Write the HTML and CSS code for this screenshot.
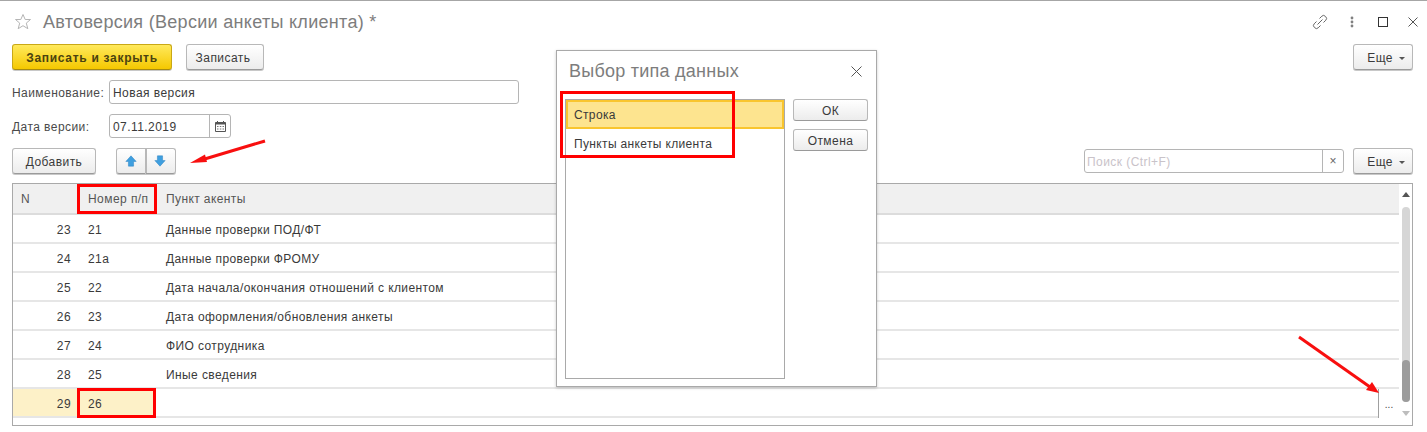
FILE: index.html
```html
<!DOCTYPE html>
<html lang="ru">
<head>
<meta charset="utf-8">
<title>Автоверсия</title>
<link rel="stylesheet" href="styles.css">
</head>
<body>
<main class="window">
  <header class="titlebar">
    <svg class="star" width="18" height="18" viewBox="0 0 18 18"><path d="M9 1.500l2.200 5h5.300l-4.200 3.600 1.500 5.600L9 12.700l-4.800 3 1.500-5.600L1.500 6.500h5.300z" fill="none" stroke="#b5b5b5" stroke-width="1"/></svg>
    <h1 class="title">Автоверсия (Версии анкеты клиента) *</h1>
    <div class="win-tools">
      <svg width="16" height="16" viewBox="0 0 16 16" class="tool-link"><path d="M5.500 10.500l5-5M7.500 4.500l2.300-2.300a2.400 2.400 0 0 1 3.400 0l0.600 0.600a2.400 2.400 0 0 1 0 3.400l-2.300 2.300M8.500 11.500l-2.300 2.300a2.400 2.400 0 0 1-3.400 0l-0.600-0.600a2.400 2.400 0 0 1 0-3.400l2.300-2.300" fill="none" stroke="#666" stroke-width="1"/></svg>
      <svg width="4" height="12" viewBox="0 0 4 12" class="tool-dots"><circle cx="2" cy="2" r="1.400" fill="#808080"/><circle cx="2" cy="6" r="1.400" fill="#808080"/><circle cx="2" cy="10" r="1.400" fill="#808080"/></svg>
      <span class="tool-max"></span>
      <svg width="10" height="10" viewBox="0 0 10 10" class="tool-close"><path d="M0.500 0.500l9 9M9.500 0.500l-9 9" stroke="#555" stroke-width="1"/></svg>
    </div>
  </header>

  <div class="row row-actions">
    <button class="btn btn-primary">Записать и закрыть</button>
    <button class="btn btn-save">Записать</button>
    <button class="btn btn-more">Еще <i class="caret"></i></button>
  </div>

  <div class="row field-row">
    <label class="label">Наименование:</label>
    <div class="input input-name">Новая версия</div>
  </div>
  <div class="row field-row">
    <label class="label">Дата версии:</label>
    <div class="input input-date">
      <span class="date-value">07.11.2019</span>
      <span class="date-btn">
        <svg width="11" height="11" viewBox="0 0 11 11"><path d="M0.500 1.500h10v9h-10z" fill="none" stroke="#555"/><path d="M0.500 1.500h10v2h-10z" fill="#555"/><path d="M2.500 0v2M8.500 0v2" stroke="#555"/><path d="M2 5.500h1.500M4.800 5.500h1.500M7.500 5.500h1.500M2 8h1.500M4.800 8h1.500M7.500 8h1.500" stroke="#777"/></svg>
      </span>
    </div>
  </div>

  <div class="row row-tools">
    <button class="btn btn-add">Добавить</button>
    <div class="btn-group">
      <button class="btn-icon">
        <svg width="12" height="12" viewBox="0 0 13 14"><path d="M6.500 1L12.500 7.500H9.500V13H3.500V7.500H0.500z" fill="#3f9fdf" stroke="#2f86c4" stroke-width="0.600"/></svg>
      </button>
      <button class="btn-icon btn-icon-down">
        <svg width="12" height="12" viewBox="0 0 13 14"><path d="M6.500 13L12.500 6.500H9.500V1H3.500V6.500H0.500z" fill="#3f9fdf" stroke="#2f86c4" stroke-width="0.600"/></svg>
      </button>
    </div>
    <div class="search">
      <span class="search-text">Поиск (Ctrl+F)</span>
      <span class="search-clear">×</span>
    </div>
    <button class="btn btn-more">Еще <i class="caret"></i></button>
  </div>

  <section class="table">
    <div class="table-main">
      <div class="t-row t-head">
        <span class="c-n head-n">N</span>
        <span class="c-num">Номер п/п</span>
        <span class="c-name">Пункт акенты</span>
      </div>
      <div class="t-row"><span class="c-n">23</span><span class="c-num">21</span><span class="c-name">Данные проверки ПОД/ФТ</span></div>
      <div class="t-row"><span class="c-n">24</span><span class="c-num">21а</span><span class="c-name">Данные проверки ФРОМУ</span></div>
      <div class="t-row"><span class="c-n">25</span><span class="c-num">22</span><span class="c-name">Дата начала/окончания отношений с клиентом</span></div>
      <div class="t-row"><span class="c-n">26</span><span class="c-num">23</span><span class="c-name">Дата оформления/обновления анкеты</span></div>
      <div class="t-row"><span class="c-n">27</span><span class="c-num">24</span><span class="c-name">ФИО сотрудника</span></div>
      <div class="t-row"><span class="c-n">28</span><span class="c-num">25</span><span class="c-name">Иные сведения</span></div>
      <div class="t-row t-current">
        <span class="c-n">29</span><span class="c-num">26</span><span class="c-name"></span>
        <span class="c-pick">...</span>
      </div>
    </div>
    <div class="scrollbar">
      <i class="sb-up"></i>
      <div class="sb-track"><div class="sb-thumb"></div></div>
      <i class="sb-down"></i>
    </div>
  </section>
</main>

<aside class="dialog">
  <div class="dlg-head">
    <h2 class="dlg-title">Выбор типа данных</h2>
    <svg width="11" height="11" viewBox="0 0 11 11"><path d="M0.500 0.500l10 10M10.500 0.500l-10 10" stroke="#555" stroke-width="1"/></svg>
  </div>
  <div class="dlg-body">
    <div class="list">
      <div class="list-item list-selected">Строка</div>
      <div class="list-item">Пункты анкеты клиента</div>
    </div>
    <div class="dlg-buttons">
      <button class="btn btn-dlg">ОК</button>
      <button class="btn btn-dlg">Отмена</button>
    </div>
  </div>
</aside>

<div class="mark mark-head"></div>
<div class="mark mark-cell"></div>
<div class="mark mark-list"></div>
<svg class="arrows" width="1427" height="432" viewBox="0 0 1427 432">
  <path d="M265 141L203 159.500" stroke="#f80f0f" stroke-width="3" fill="none"/>
  <path d="M190 163L205 154.500L207 162z" fill="#f80f0f"/>
  <path d="M1299 337L1370 387" stroke="#f80f0f" stroke-width="3" fill="none"/>
  <path d="M1379 393L1366 390L1372 382z" fill="#f80f0f"/>
</svg>
</body>
</html>
```
FILE: styles.css
```css
* { box-sizing: border-box; }
html, body { margin: 0; padding: 0; }
body {
  width: 1427px;
  height: 432px;
  overflow: hidden;
  background: #fff;
  color: #3a3a3a;
  font: 12px/16px "Liberation Sans", Arial, sans-serif;
  letter-spacing: .44px;
  border-top: 1px solid #a6a6a6;
}
.window { padding: 0 14px 0 12px; }
.titlebar {
  height: 43px;
  display: flex;
  align-items: center;
  padding-bottom: 2px;
}
.star { margin: 0 11px 0 2px; }
.title {
  margin: 0;
  font-size: 18px;
  font-weight: 400;
  line-height: 24px;
  letter-spacing: .3px;
  color: #7d7d7d;
}
.win-tools {
  margin-left: auto;
  display: flex;
  align-items: center;
}
.tool-link { margin-right: 22px; }
.tool-dots { margin-right: 24px; }
.tool-max {
  width: 10px;
  height: 10px;
  border: 1px solid #333;
  margin-right: 20px;
}
.tool-close { margin-right: -5px; }

.row { display: flex; align-items: center; }
.row-actions { height: 26px; margin-bottom: 10px; }
.field-row { height: 24px; margin-bottom: 10px; }
.row-tools { height: 26px; margin-bottom: 9px; }

.btn, .btn-icon {
  font: inherit;
  letter-spacing: inherit;
  color: #3a3a3a;
  height: 26px;
  padding: 1px 0 0;
  border: 1px solid #b8b8b8;
  border-bottom-color: #9a9a9a;
  border-radius: 3px;
  background: linear-gradient(#fff, #ececec);
  box-shadow: 0 1px 0 #c8c8c8;
}
.btn-primary {
  width: 160px;
  font-weight: 700;
  letter-spacing: .7px;
  color: #4a4210;
  background: linear-gradient(#ffe95c, #f5c800);
  border-color: #c9a816;
  border-bottom-color: #a78b10;
}
.btn-save { width: 78px; margin-left: 14px; padding-right: 4px; }
.btn-more { width: 60px; margin-left: auto; flex: none; padding-left: 6px; }
.caret {
  display: inline-block;
  width: 0;
  height: 0;
  margin-left: 2px;
  vertical-align: 2px;
  border: 3px solid transparent;
  border-top-color: #555;
  border-bottom-width: 0;
}
.label { width: 97px; color: #4a4a4a; padding-top: 1px; }
.input {
  height: 24px;
  padding-top: 1px;
  border: 1px solid #b5b5b5;
  border-radius: 3px;
  background: #fff;
  display: flex;
  align-items: center;
}
.input-name { width: 410px; padding-left: 3px; }
.input-date { width: 122px; padding-top: 0; }
.date-value { flex: 1; padding-left: 3px; padding-top: 1px; }
.date-btn {
  width: 21px;
  height: 100%;
  border-left: 1px solid #b5b5b5;
  display: flex;
  align-items: center;
  justify-content: center;
}

.btn-add { width: 84px; }
.btn-group { display: flex; margin-left: 20px; }
.btn-icon {
  width: 30px;
  display: flex;
  align-items: center;
  justify-content: center;
  padding: 0;
  border-radius: 3px 0 0 3px;
}
.btn-icon + .btn-icon { border-left: 0; border-radius: 0 3px 3px 0; box-shadow: 0 1px 0 #c8c8c8, inset 1px 0 0 #b8b8b8; }
.btn-icon-down { padding-right: 2px; }
.search {
  margin-left: auto;
  width: 260px;
  height: 24px;
  border: 1px solid #b5b5b5;
  border-radius: 3px;
  display: flex;
  align-items: center;
}
.search-text { flex: 1; padding: 1px 0 0 2px; color: #c9c3c9; }
.search-clear {
  width: 21px;
  height: 100%;
  border-left: 1px solid #b5b5b5;
  text-align: center;
  line-height: 22px;
  letter-spacing: 0;
  color: #666;
}
.row-tools .btn-more { margin-left: 9px; }

.table {
  height: 243px;
  width: 1401px;
  border: 1px solid #a9a9a9;
  display: flex;
}
.table-main { width: 1386px; flex: none; }
.t-row {
  position: relative;
  height: 29px;
  display: grid;
  grid-template-columns: 64px 80px 1fr;
  align-items: center;
  border-bottom: 2px solid #e6e6e6;
}
.t-row > span { line-height: 31px; height: 27px; }
.t-row.t-head > span { line-height: 29px; }
.t-head {
  height: 31px;
  background: #f0f0f0;
  color: #555;
  border-bottom-color: #dcdcdc;
}
.c-n { text-align: right; padding-right: 6px; }
.head-n { text-align: left; padding-left: 8px; }
.c-num { padding-left: 11px; }
.c-name { padding-left: 9px; letter-spacing: .4px; }
.t-current { background: linear-gradient(to right, #fdf1c8 142px, #fff 142px); }
.t-row > .c-pick {
  position: absolute;
  right: 0;
  top: 0;
  bottom: -2px;
  height: auto;
  width: 21px;
  border-left: 1px solid #a0a0a0;
  background: #fff;
  text-align: center;
  letter-spacing: 0;
  color: #444;
  font-size: 10px;
}
.scrollbar {
  flex: 1;
  padding: 0 3px 0 3px;
  display: flex;
  flex-direction: column;
  align-items: center;
}
.sb-up, .sb-down {
  width: 0;
  height: 0;
  border: 4px solid transparent;
  flex: none;
}
.sb-up { border-bottom: 5px solid #555; border-top-width: 0; margin: 8px 0 10px; }
.sb-down { border-top: 5px solid #bdbdbd; border-bottom-width: 0; margin-top: 9px; }
.sb-track {
  width: 8px;
  height: 195px;
  flex: none;
  background: #d6d6d6;
  border-radius: 4px;
  display: flex;
  align-items: flex-end;
}
.sb-thumb {
  width: 100%;
  height: 42px;
  background: #9c9c9c;
  border-radius: 4px;
}

.dialog {
  position: absolute;
  left: 556px;
  top: 50px;
  width: 321px;
  height: 337px;
  background: #fff;
  border: 1px solid #a9a9a9;
  box-shadow: 0 1px 3px rgba(0,0,0,.2);
  padding: 0 8px;
}
.dlg-head {
  height: 48px;
  display: flex;
  align-items: center;
  justify-content: space-between;
  padding: 0 6px 8px 4px;
}
.dlg-title {
  margin: 0;
  font-size: 18px;
  font-weight: 400;
  letter-spacing: .25px;
  color: #7d7d7d;
}
.dlg-body { display: flex; gap: 8px; }
.list {
  width: 220px;
  height: 280px;
  border: 1px solid #a9a9a9;
  letter-spacing: .35px;
}
.list-item {
  height: 29px;
  line-height: 31px;
  padding-left: 8px;
}
.list-selected {
  background: #fde48f;
  border: 2px solid #f9c52e;
  padding-left: 6px;
  line-height: 27px;
}
.dlg-buttons { display: flex; flex-direction: column; gap: 8px; }
.btn-dlg { width: 75px; height: 22px; box-shadow: none; }

.mark {
  position: absolute;
  border: 3px solid #f00;
  pointer-events: none;
}
.mark-head { left: 77px; top: 184px; width: 80px; height: 30px; }
.mark-cell { left: 77px; top: 388px; width: 79px; height: 30px; }
.mark-list { left: 560px; top: 91px; width: 175px; height: 67px; }
.arrows { position: absolute; left: 0; top: 0; pointer-events: none; }
```
